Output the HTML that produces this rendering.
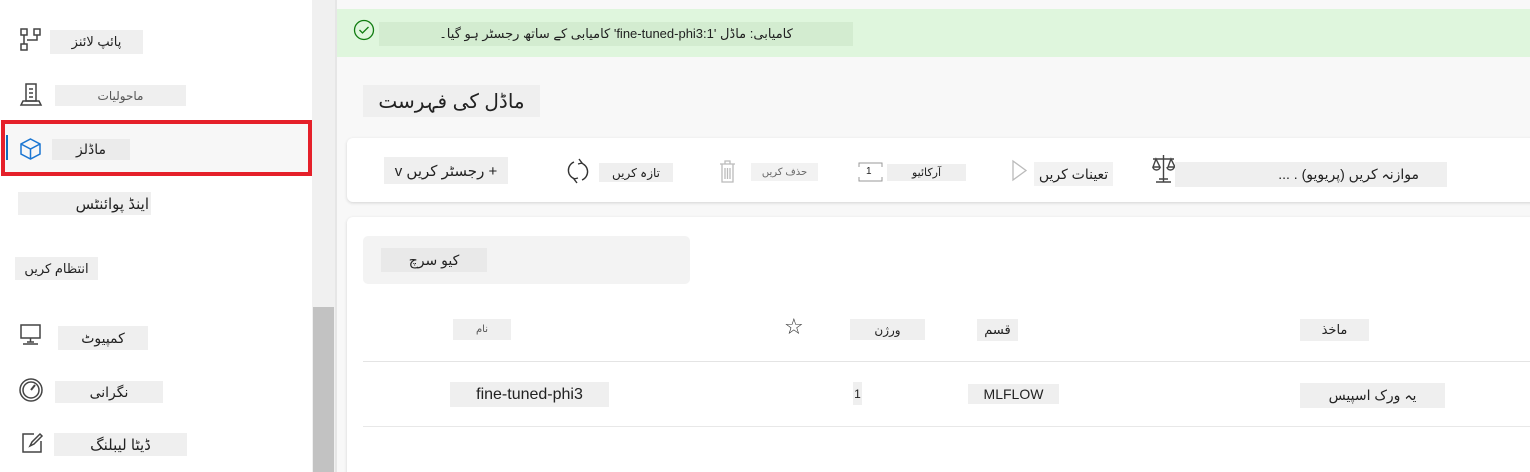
<!DOCTYPE html>
<html><head><meta charset="utf-8"><style>
*{margin:0;padding:0;box-sizing:border-box}
html,body{width:1530px;height:472px;overflow:hidden}
body{background:#f8f8f8;position:relative;font-family:"Liberation Sans","Noto Sans CJK SC",sans-serif;color:#222}
.a{position:absolute}
.b{position:absolute;background:#efefef;display:flex;align-items:center;justify-content:center;white-space:nowrap;direction:rtl;font-family:"Liberation Sans","DejaVu Sans",sans-serif}
svg{position:absolute;overflow:visible}
</style></head><body>
<div class="a" style="left:0;top:0;width:312px;height:472px;background:#fff"></div>
<div class="a" style="left:312px;top:0;width:24px;height:472px;background:#f0f0f0"></div>
<div class="a" style="left:313px;top:307px;width:21px;height:165px;background:#c2c2c2"></div>
<div class="a" style="left:335px;top:0;width:2px;height:472px;background:#e6e6e6"></div>

<svg style="left:20px;top:28px" width="22" height="24" fill="none" stroke="#444" stroke-width="1.5"><rect x="1" y="1" width="6" height="6"/><rect x="14" y="1" width="6" height="6"/><rect x="1" y="16" width="6" height="6"/><path d="M4 7v9M7 12h10V7"/></svg>
<div class="b" style="left:50px;top:30px;width:93px;height:24px;font-size:13px">پائپ لائنز</div>

<svg style="left:20px;top:83px" width="22" height="24" fill="none" stroke="#444" stroke-width="1.5"><rect x="6" y="1" width="10" height="17"/><path d="M9 6h4M9 10h4M9 14h4M1 22h20l-2-4H3z"/></svg>
<div class="b" style="left:55px;top:85px;width:131px;height:21px;font-size:12px;color:#555">ماحولیات</div>

<div class="a" style="left:1px;top:120px;width:311px;height:56px;border:4px solid #e5202a;background:#f7f7f7"></div>
<div class="a" style="left:6px;top:135px;width:2px;height:25px;background:#0f6cbd"></div>
<svg style="left:20px;top:138px" width="21" height="22" fill="none" stroke="#1b76d2" stroke-width="1.5"><path d="M10.5 1 20 6v10l-9.5 5L1 16V6z M1 6l9.5 5L20 6 M10.5 11v10"/></svg>
<div class="b" style="left:52px;top:139px;width:78px;height:21px;font-size:14px;background:#ebebeb">ماڈلز</div>

<div class="b" style="left:18px;top:192px;width:133px;height:23px;font-size:15px;justify-content:flex-start;padding-right:2px">اینڈ پوائنٹس</div>
<div class="b" style="left:15px;top:257px;width:83px;height:23px;font-size:13px">انتظام کریں</div>

<svg style="left:20px;top:324px" width="21" height="22" fill="none" stroke="#444" stroke-width="1.5"><rect x="1" y="1" width="19" height="13"/><path d="M10.5 14v4M3 20h15M7 18h7"/></svg>
<div class="b" style="left:58px;top:326px;width:90px;height:24px;font-size:14px">کمپیوٹ</div>

<svg style="left:19px;top:378px" width="24" height="24" fill="none" stroke="#444" stroke-width="1.5"><circle cx="12" cy="12" r="11"/><circle cx="12" cy="12" r="8"/><path d="M12 12l4-5" stroke-width="2"/></svg>
<div class="b" style="left:55px;top:381px;width:108px;height:22px;font-size:14px">نگرانی</div>

<svg style="left:22px;top:433px" width="20" height="20" fill="none" stroke="#444" stroke-width="1.5"><path d="M12 1H1v18h18V8M8 13l2-4 8-8 2 2-8 8z"/></svg>
<div class="b" style="left:54px;top:433px;width:133px;height:23px;font-size:15px">ڈیٹا لیبلنگ</div>

<div class="a" style="left:337px;top:9px;width:1193px;height:48px;background:#dff6dd"></div>
<svg style="left:354px;top:20px" width="20" height="20" fill="none" stroke="#107c10" stroke-width="1.3"><circle cx="10" cy="10" r="9.5"/><path d="M5.5 10l3 3 6-6"/></svg>
<div class="b" style="left:379px;top:22px;width:474px;height:24px;font-size:13px;background:#d3ecd0">کامیابی: ماڈل 'fine-tuned-phi3:1' کامیابی کے ساتھ رجسٹر ہو گیا۔</div>

<div class="b" style="left:363px;top:85px;width:177px;height:32px;font-size:20px">ماڈل کی فہرست</div>

<div class="a" style="left:347px;top:138px;width:1190px;height:64px;background:#fff;border-radius:6px;box-shadow:0 1px 3px rgba(0,0,0,.15)"></div>
<div class="b" style="left:384px;top:157px;width:124px;height:27px;font-size:15px">+ رجسٹر کریں v</div>
<svg style="left:566px;top:157px" width="24" height="28" fill="none" stroke="#333" stroke-width="1.4"><path d="M8 5A9 9 0 0 0 9 22M16 23A9 9 0 0 0 15 6M13 2l3 4-4 1M11 26l-3-4 4-1"/></svg>
<div class="b" style="left:599px;top:163px;width:74px;height:19px;font-size:12px">تازہ کریں</div>
<svg style="left:719px;top:160px" width="17" height="23" fill="none" stroke="#bbb" stroke-width="1.3"><path d="M1 4h15M6 4V1h5v3M3 4v18h11V4M6 8v11M8.5 8v11M11 8v11"/></svg>
<div class="b" style="left:751px;top:163px;width:67px;height:18px;font-size:10px;color:#666;background:#f2f2f2">حذف کریں</div>
<svg style="left:858px;top:162px" width="25" height="20" fill="none" stroke="#999" stroke-width="1"><path d="M1 5V1h23v4M1 15v4h23v-4"/></svg>
<div class="a" style="left:866px;top:166px;font-size:10px">1</div>
<div class="b" style="left:887px;top:164px;width:79px;height:17px;font-size:11px">آرکائیو</div>
<svg style="left:1012px;top:160px" width="15" height="21" fill="none" stroke="#bbb" stroke-width="1.3"><path d="M1 1l13 9.5L1 20z"/></svg>
<div class="b" style="left:1034px;top:162px;width:79px;height:24px;font-size:14px;background:#f2f2f2">تعینات کریں</div>
<svg style="left:1152px;top:154px" width="23" height="30" fill="none" stroke="#444" stroke-width="1.4"><path d="M11.5 1v27M1 5h21M4 5l-3 8h7zM19 5l-3 8h7zM1 13a3.5 3 0 0 0 7 0M15 13a3.5 3 0 0 0 7 0M4 28h15M7 25h9"/></svg>
<div class="b" style="left:1175px;top:162px;width:272px;height:25px;font-size:14px;justify-content:flex-start;padding-right:28px">موازنہ کریں (پریویو) . ...</div>

<div class="a" style="left:347px;top:217px;width:1190px;height:262px;background:#fff;border-radius:6px;box-shadow:0 1px 3px rgba(0,0,0,.15)"></div>
<div class="a" style="left:363px;top:236px;width:327px;height:48px;background:#f3f3f3;border-radius:5px"></div>
<div class="b" style="left:381px;top:248px;width:106px;height:24px;font-size:14px;background:#e9e9e9">کیو سرچ</div>

<div class="b" style="left:453px;top:319px;width:58px;height:21px;font-size:10px;color:#555">نام</div>
<div class="a" style="left:784px;top:315px;font-size:22px;color:#333;font-family:'DejaVu Sans',sans-serif">☆</div>
<div class="b" style="left:850px;top:319px;width:75px;height:21px;font-size:12px">ورژن</div>
<div class="b" style="left:977px;top:319px;width:41px;height:22px;font-size:13px">قسم</div>
<div class="b" style="left:1300px;top:319px;width:69px;height:22px;font-size:13px">ماخذ</div>
<div class="a" style="left:363px;top:361px;width:1167px;height:1px;background:#e4e4e4"></div>

<div class="b" style="left:450px;top:382px;width:159px;height:25px;font-size:16px;direction:ltr">fine-tuned-phi3</div>
<div class="b" style="left:853px;top:382px;width:9px;height:23px;font-size:12px">1</div>
<div class="b" style="left:968px;top:384px;width:91px;height:20px;font-size:14px;direction:ltr">MLFLOW</div>
<div class="b" style="left:1300px;top:383px;width:145px;height:25px;font-size:14px">یہ ورک اسپیس</div>
<div class="a" style="left:363px;top:426px;width:1167px;height:1px;background:#e8e8e8"></div>
</body></html>
